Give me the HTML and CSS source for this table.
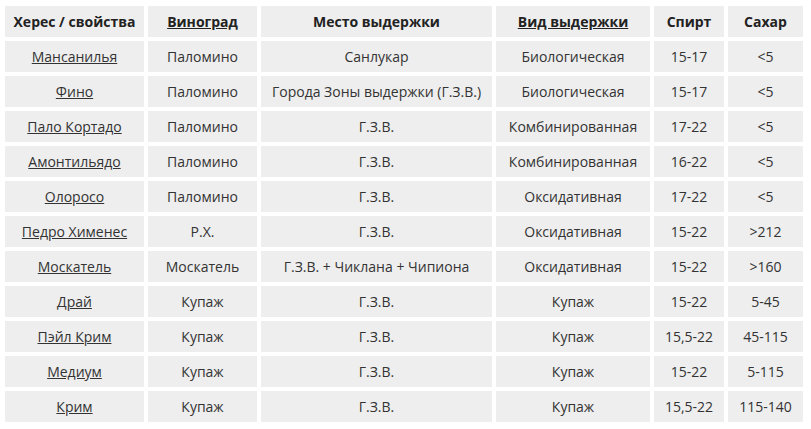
FILE: index.html
```html
<!DOCTYPE html>
<html lang="ru">
<head>
<meta charset="utf-8">
<link rel="stylesheet" href="styles.css">
</head>
<body>
<table class="sherry">
  <colgroup>
    <col class="c1"><col class="c2"><col class="c3"><col class="c4"><col class="c5"><col class="c6">
  </colgroup>
  <thead>
    <tr>
      <th>Херес / свойства</th>
      <th><a href="#">Виноград</a></th>
      <th>Место выдержки</th>
      <th><a href="#">Вид выдержки</a></th>
      <th>Спирт</th>
      <th>Сахар</th>
    </tr>
  </thead>
  <tbody>
    <tr><td><a href="#">Мансанилья</a></td><td>Паломино</td><td>Санлукар</td><td>Биологическая</td><td>15-17</td><td>&lt;5</td></tr>
    <tr><td><a href="#">Фино</a></td><td>Паломино</td><td>Города Зоны выдержки (Г.З.В.)</td><td>Биологическая</td><td>15-17</td><td>&lt;5</td></tr>
    <tr><td><a href="#">Пало Кортадо</a></td><td>Паломино</td><td>Г.З.В.</td><td>Комбинированная</td><td>17-22</td><td>&lt;5</td></tr>
    <tr><td><a href="#">Амонтильядо</a></td><td>Паломино</td><td>Г.З.В.</td><td>Комбинированная</td><td>16-22</td><td>&lt;5</td></tr>
    <tr><td><a href="#">Олоросо</a></td><td>Паломино</td><td>Г.З.В.</td><td>Оксидативная</td><td>17-22</td><td>&lt;5</td></tr>
    <tr><td><a href="#">Педро Хименес</a></td><td>Р.Х.</td><td>Г.З.В.</td><td>Оксидативная</td><td>15-22</td><td>&gt;212</td></tr>
    <tr><td><a href="#">Москатель</a></td><td>Москатель</td><td>Г.З.В. + Чиклана + Чипиона</td><td>Оксидативная</td><td>15-22</td><td>&gt;160</td></tr>
    <tr><td><a href="#">Драй</a></td><td>Купаж</td><td>Г.З.В.</td><td>Купаж</td><td>15-22</td><td>5-45</td></tr>
    <tr><td><a href="#">Пэйл Крим</a></td><td>Купаж</td><td>Г.З.В.</td><td>Купаж</td><td>15,5-22</td><td>45-115</td></tr>
    <tr><td><a href="#">Медиум</a></td><td>Купаж</td><td>Г.З.В.</td><td>Купаж</td><td>15-22</td><td>5-115</td></tr>
    <tr><td><a href="#">Крим</a></td><td>Купаж</td><td>Г.З.В.</td><td>Купаж</td><td>15,5-22</td><td>115-140</td></tr>
  </tbody>
</table>
</body>
</html>
```

FILE: styles.css
```css
html, body {
  margin: 0;
  padding: 0;
  background: #ffffff;
}
body {
  padding: 2px 0 0 1px;
  font-family: "Open Sans", "Noto Sans", sans-serif;
  font-size: 14px;
  color: #333333;
}
.sherry {
  border-collapse: separate;
  border-spacing: 4px;
  table-layout: fixed;
  width: 806px;
}
.c1 { width: 139px; }
.c2 { width: 109px; }
.c3 { width: 231px; }
.c4 { width: 154px; }
.c5 { width: 70px; }
.c6 { width: 75px; }
.sherry th,
.sherry td {
  background: #eeeeee;
  height: 31px;
  padding: 0 4px;
  text-align: center;
  vertical-align: middle;
  white-space: nowrap;
  box-sizing: border-box;
}
.sherry th {
  font-weight: bold;
  color: #222222;
}
.sherry a {
  color: #333333;
  text-decoration: underline;
}
.sherry th a {
  color: #222222;
}
```
